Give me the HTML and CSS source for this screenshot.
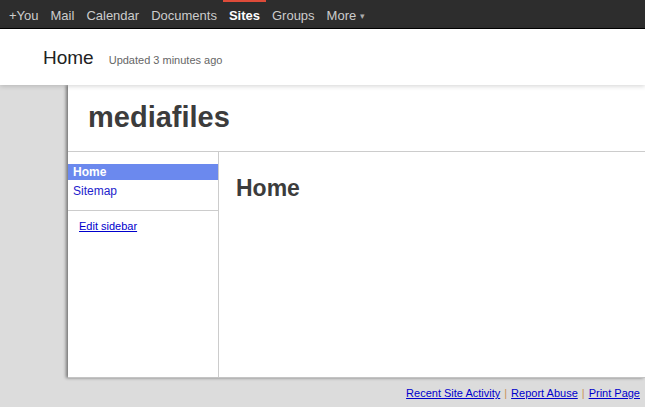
FILE: index.html
```html
<!DOCTYPE html>
<html>
<head>
<meta charset="utf-8">
<link rel="stylesheet" href="styles.css">
</head>
<body>
<div class="gbar">
  <a class="gitem">+You</a>
  <a class="gitem">Mail</a>
  <a class="gitem">Calendar</a>
  <a class="gitem">Documents</a>
  <a class="gitem active">Sites</a>
  <a class="gitem">Groups</a>
  <a class="gitem">More <span class="arrow">&#9662;</span></a>
</div>
<div class="header">
  <span class="htitle">Home</span>
  <span class="hupdated">Updated 3 minutes ago</span>
</div>
<div class="page">
  <div class="panel">
    <div class="sitetitle">mediafiles</div>
    <div class="body">
      <div class="sidebar">
        <div class="nav">
          <a class="navitem current">Home</a>
          <a class="navitem">Sitemap</a>
        </div>
        <div class="edit"><a>Edit sidebar</a></div>
      </div>
      <div class="main">
        <h1 class="ptitle">Home</h1>
      </div>
    </div>
  </div>
  <div class="footer">
    <a>Recent Site Activity</a><span class="sep">|</span><a>Report Abuse</a><span class="sep">|</span><a>Print Page</a>
  </div>
</div>
</body>
</html>
```
FILE: styles.css
```css
* { box-sizing: border-box; }
html, body { margin: 0; padding: 0; }
body {
  font-family: "Liberation Sans", Arial, sans-serif;
  background: #dcdcdc;
  width: 645px;
  height: 407px;
  overflow: hidden;
}
a { text-decoration: none; cursor: pointer; }

.gbar {
  height: 29px;
  background: #2d2d2d;
  border-bottom: 1px solid #000;
  display: flex;
  padding-left: 3px;
  font-size: 13px;
}
.gitem {
  color: #cccccc;
  padding: 0 6px;
  line-height: 27px;
  border-top: 2px solid transparent;
  height: 28px;
}
.gitem.active {
  color: #fff;
  font-weight: bold;
  border-top-color: #dd4b39;
}
.arrow { font-size: 9px; color: #aaa; position: relative; top: -1px; }

.header {
  height: 56px;
  background: #fff;
  padding: 18px 0 0 43px;
  position: relative;
  z-index: 2;
  box-shadow: 0 1px 5px rgba(0,0,0,0.18);
  display: flex;
  align-items: baseline;
}
.htitle { font-size: 19px; color: #222; }
.hupdated { font-size: 11px; color: #666; margin-left: 15px; }

.page { display: flex; flex-direction: column; }
.panel {
  margin-left: 68px;
  height: 293px;
  background: #fff;
  border-bottom: 1px solid #c4c4c4;
  box-shadow: -2px 0 3px rgba(0,0,0,0.45);
  display: flex;
  flex-direction: column;
}
.sitetitle {
  height: 67px;
  border-bottom: 1px solid #cccccc;
  font-size: 29px;
  font-weight: bold;
  color: #3c3c3c;
  padding: 16px 0 0 20px;
}
.body { display: flex; flex: 1; }
.sidebar {
  width: 151px;
  border-right: 1px solid #cccccc;
  padding-top: 12px;
}
.nav {
  border-bottom: 1px solid #cccccc;
  padding-bottom: 8px;
}
.navitem {
  display: block;
  font-size: 12px;
  line-height: 16px;
  padding-left: 5px;
  color: #2222cc;
  margin-bottom: 3px;
}
.navitem.current {
  background: #6b89ee;
  color: #fff;
  font-weight: bold;
}
.edit { padding: 9px 0 0 11px; font-size: 11px; }
.edit a { color: #0000cc; text-decoration: underline; }

.main { flex: 1; padding: 23px 0 0 17px; }
.ptitle {
  margin: 0;
  font-size: 23px;
  font-weight: bold;
  color: #3c3c3c;
}

.footer {
  display: flex;
  justify-content: flex-end;
  padding: 9px 5px 0 0;
  font-size: 11px;
}
.footer a { color: #0000cc; text-decoration: underline; }
.sep { color: #c9935a; padding: 0 4px; }
```
